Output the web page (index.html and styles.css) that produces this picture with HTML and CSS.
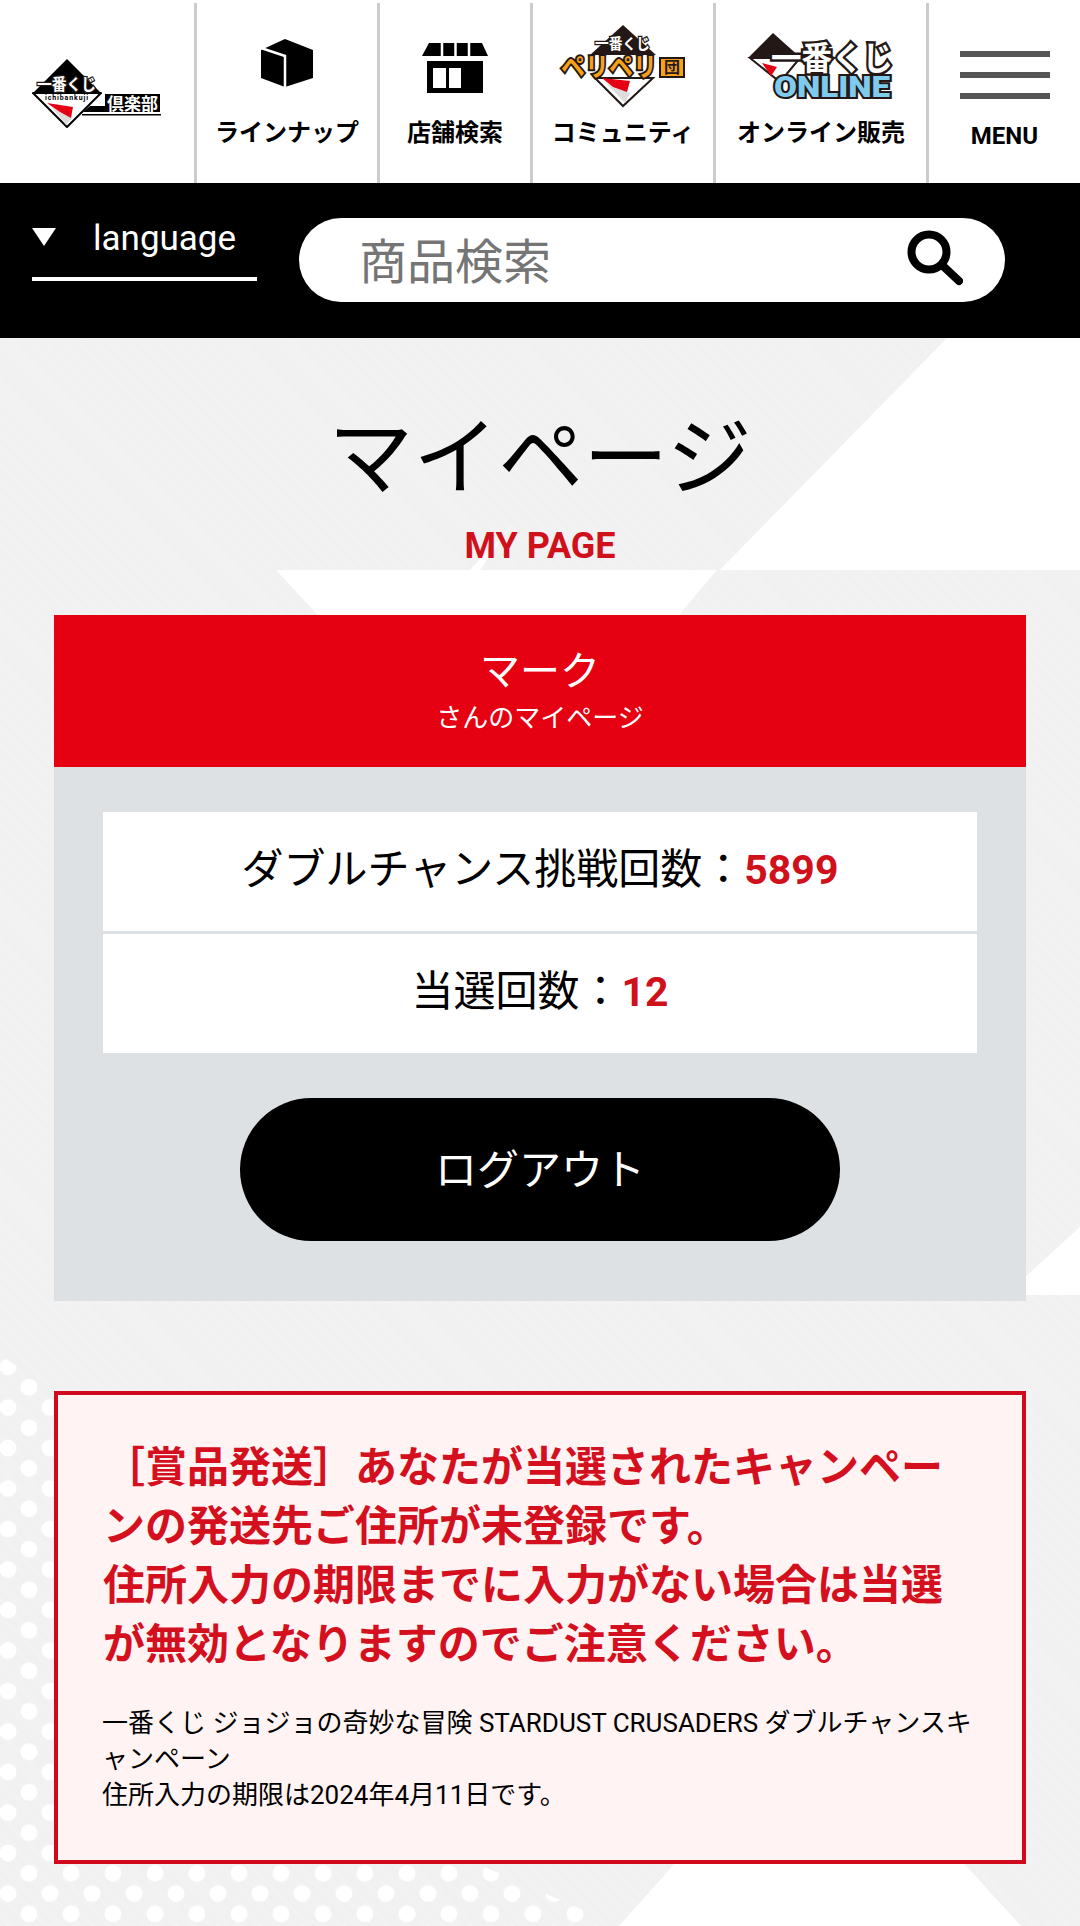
FILE: index.html
```html
<!DOCTYPE html>
<html lang="ja">

<head>
    <meta charset="UTF-8">
    <meta name="viewport" content="width=device-width, initial-scale=1.0">
    <title>マイページ</title>
    <link rel="stylesheet" href="styles.css">
</head>

<body>
    <header class="topNav">
        <a class="navLogo" href="#">
            <svg width="194" height="180" viewBox="0 3 194 180">
                <polygon points="33,93 67,127 101,93" fill="#fff" stroke="#000" stroke-width="2" stroke-linejoin="round" />
                <polygon points="67,59 102,94 32,94" fill="#000" />
                <polygon points="50,105 66,125 72,118 60,112" fill="#ddd" />
                <polygon points="47,103 73,107 71,118 60,112" fill="#e50012" />
                <text x="37" y="90" class="logoBig" font-size="16" textLength="59" lengthAdjust="spacingAndGlyphs">一番くじ</text>
                <text x="45" y="100" class="logoSmall" font-size="7" textLength="43">ichibankuji</text>
                <polygon points="82,113 90,106 105,106 105,94 160,94 160,112 82,112" fill="#000" />
                <rect x="82" y="114" width="79" height="1.5" fill="#000" />
                <text x="90" y="110" class="logoClub" font-size="6" textLength="15">Club</text>
                <text x="107" y="110" class="logoBlock" font-size="17" textLength="51" lengthAdjust="spacingAndGlyphs">倶楽部</text>
            </svg>
        </a>
        <a class="navItem" href="#">
            <svg width="180" height="100" viewBox="197 15 180 100">
                <polygon points="285,39 313,50 313,78 285,87 261,78 261,50" fill="#000" />
                <polyline points="261,48 285,56 285,87" fill="none" stroke="#fff" stroke-width="2.5" />
            </svg>
            <span>ラインナップ</span>
        </a>
        <a class="navItem" href="#">
            <svg width="150" height="100" viewBox="380 15 150 100">
                <polygon points="429,43 482,43 488,56 422,56" fill="#000" />
                <path d="M442 43v13M455.500 43v13M469 43v13" stroke="#fff" stroke-width="2.500" />
                <rect x="427" y="61" width="56" height="32" fill="#000" />
                <rect x="433" y="68" width="13" height="20" fill="#fff" />
                <rect x="449" y="68" width="12" height="20" fill="#fff" />
            </svg>
            <span>店舗検索</span>
        </a>
        <a class="navItem" href="#">
            <svg width="180" height="100" viewBox="533 15 180 100">
                <polygon points="595,78 623,106 653,78" fill="#fff" stroke="#231815" stroke-width="2" />
                <polygon points="623,25 656,55 590,55" fill="#231815" />
                <polygon points="605,82 625,103 630,93 613,87" fill="#ddd" />
                <polygon points="602,78 630,81 627,92 613,87" fill="#e50012" />
                <text x="595" y="49" class="logoBig" font-size="15" textLength="55" lengthAdjust="spacingAndGlyphs">一番くじ</text>
                <text x="561" y="76" class="logoPeri" font-size="26" textLength="96" lengthAdjust="spacingAndGlyphs">ペリペリ</text>
                <rect x="660" y="58" width="24" height="19" fill="#f5a21b" stroke="#231815" stroke-width="2" />
                <text x="664" y="73" class="logoDark" font-size="16">団</text>
            </svg>
            <span>コミュニティ</span>
        </a>
        <a class="navItem" href="#">
            <svg width="210" height="100" viewBox="716 15 210 100">
                <polygon points="750,58 780,82 800,58" fill="#fff" stroke="#231815" stroke-width="2" />
                <polygon points="773,33 801,58 748,58" fill="#231815" />
                <polygon points="762,63 777,67 771,76" fill="#e50012" />
                <text x="771" y="70" class="logoBig logoOnlineTop" font-size="33" textLength="122" lengthAdjust="spacingAndGlyphs">一番くじ</text>
                <text x="774" y="97" class="logoOnline" font-size="30" textLength="116" lengthAdjust="spacingAndGlyphs">ONLINE</text>
            </svg>
            <span>オンライン販売</span>
        </a>
        <button class="menuBtn" type="button">
            <span class="menuBars"><i></i><i></i><i></i></span>
            <span class="menuText">MENU</span>
        </button>
    </header>

    <div class="searchBand">
        <div class="langBox">
            <span class="langArrow"></span>
            <span>language</span>
        </div>
        <form class="searchForm" action="">
            <input class="searchInput" type="text" placeholder="商品検索">
            <button class="searchBtn" type="button" aria-label="検索">
                <svg width="56" height="56" viewBox="0 0 56 56">
                    <circle cx="22" cy="22" r="17.500" fill="none" stroke="#000" stroke-width="8" />
                    <line x1="35" y1="35" x2="52" y2="51" stroke="#000" stroke-width="8" stroke-linecap="round" />
                </svg>
            </button>
        </form>
    </div>

    <main class="content">
        <!-- white shapes and dots behind the page, in page coordinates minus the header -->
        <svg class="bgShapes" width="1080" height="1588" viewBox="0 338 1080 1588">
            <defs>
                <pattern id="dots" x="8" y="1367" width="42" height="40.500" patternUnits="userSpaceOnUse">
                    <circle cx="0" cy="0" r="8.500" fill="#fff" />
                    <circle cx="42" cy="0" r="8.500" fill="#fff" />
                    <circle cx="0" cy="40.500" r="8.500" fill="#fff" />
                    <circle cx="42" cy="40.500" r="8.500" fill="#fff" />
                    <circle cx="21" cy="20.250" r="8.500" fill="#fff" />
                </pattern>
            </defs>
            <polygon points="947,338 1080,338 1080,570 720,570" fill="#fff" />
            <polygon points="276,570 717,570 658,640 341,640" fill="#fff" />
            <polygon points="512,525 470,570 480,570" fill="#fff" />
            <polygon points="1000,1300 1080,1227 1080,1295 1000,1295" fill="#fff" />
            <polygon points="678,1860 961,1860 1021,1926 619,1926" fill="#fff" />
            <polygon points="0,1355 60,1395 60,1865 480,1865 620,1926 0,1926" fill="url(#dots)" />
        </svg>

        <div class="pageTitle">
            <h1>マイページ</h1>
            <p>MY PAGE</p>
        </div>

        <section class="userCard">
            <div class="userHead">
                <div class="userName">マーク</div>
                <div class="userSub">さんのマイページ</div>
            </div>
            <div class="userBody">
                <ul class="statList">
                    <li>ダブルチャンス挑戦回数：<b>5899</b></li>
                    <li>当選回数：<b>12</b></li>
                </ul>
                <a class="logoutBtn" href="#">ログアウト</a>
            </div>
        </section>

        <section class="notice">
            <h2>［賞品発送］あなたが当選されたキャンペーンの発送先ご住所が未登録です。<br>住所入力の期限までに入力がない場合は当選が無効となりますのでご注意ください。</h2>
            <p>一番くじ ジョジョの奇妙な冒険 STARDUST CRUSADERS ダブルチャンスキャンペーン<br>住所入力の期限は2024年4月11日です。</p>
        </section>
    </main>
</body>

</html>
```

FILE: styles.css
```css
html {
    margin: 0;
}

body {
    margin: 0;
    width: 1080px;
    background-color: #fff;
    color: #000;
    font-family: Roboto, "Noto Sans CJK JP", sans-serif;
}

a {
    color: inherit;
    text-decoration: none;
}

/* top nav */
.topNav {
    display: flex;
    height: 180px;
    padding-top: 3px;
    background-color: #fff;
}

.navLogo {
    width: 194px;
    flex: none;
}

.navLogo svg,
.navItem svg {
    display: block;
}

.navItem {
    display: flex;
    flex-flow: column;
    align-items: center;
    flex: none;
    box-sizing: border-box;
    padding-top: 12px;
    border-left: solid 3px #ccc;
    font-size: 24px;
    font-weight: 700;
    line-height: 32px;
}

.navItem span {
    margin-top: 2px;
}

.navItem:nth-child(2),
.navItem:nth-child(4) {
    width: 183px;
}

.navItem:nth-child(3) {
    width: 153px;
}

.navItem:nth-child(5) {
    width: 213px;
}

.menuBtn {
    display: flex;
    flex-flow: column;
    align-items: center;
    flex: 1;
    padding: 48px 0 0;
    border: none;
    border-left: solid 3px #ccc;
    background: none;
    color: #000;
    font-family: inherit;
}

.menuBars {
    display: flex;
    flex-flow: column;
    gap: 15px;
    width: 90px;
}

.menuBars i {
    display: block;
    height: 6px;
    background-color: #555;
}

.menuText {
    margin-top: 23px;
    font-size: 24px;
    font-weight: 700;
    line-height: 28px;
}

.logoBig,
.logoBlock,
.logoSmall,
.logoClub,
.logoPeri,
.logoDark,
.logoOnline {
    font-family: "Noto Sans CJK JP", sans-serif;
    font-weight: 700;
}

.logoBig {
    fill: #fff;
    stroke: #231815;
    stroke-width: 2.5px;
    paint-order: stroke;
}

.logoOnlineTop {
    stroke-width: 5px;
}

.logoSmall,
.logoClub {
    font-family: Roboto, sans-serif;
    fill: #000;
}

.logoBlock {
    fill: #fff;
}

.logoPeri {
    fill: #f5a21b;
    stroke: #231815;
    stroke-width: 4px;
    paint-order: stroke;
}

.logoDark {
    fill: #231815;
}

.logoOnline {
    font-family: Roboto, sans-serif;
    font-weight: 900;
    fill: #7fcbee;
    stroke: #231815;
    stroke-width: 4px;
    paint-order: stroke;
}

/* language + search */
.searchBand {
    display: flex;
    align-items: center;
    height: 155px;
    padding-left: 32px;
    background-color: #000;
}

.langBox {
    display: flex;
    align-self: flex-start;
    align-items: center;
    gap: 37px;
    box-sizing: border-box;
    width: 225px;
    height: 60px;
    margin-top: 38px;
    padding-bottom: 22px;
    border-bottom: solid 4px #fff;
    color: #fff;
    font-size: 35px;
}

.langArrow {
    width: 0;
    height: 0;
    margin-top: -2px;
    border-top: solid 18px #fff;
    border-left: solid 12px transparent;
    border-right: solid 12px transparent;
}

.searchForm {
    display: flex;
    align-items: center;
    box-sizing: border-box;
    width: 706px;
    height: 84px;
    margin-top: -2px;
    margin-left: 42px;
    padding: 0 42px 0 60px;
    border-radius: 42px;
    background-color: #fff;
}

.searchInput {
    flex: 1;
    min-width: 0;
    padding: 0 0 4px;
    border: none;
    outline: none;
    font-family: "Noto Sans CJK JP", sans-serif;
    font-size: 48px;
}

.searchInput::placeholder {
    color: #757575;
}

.searchBtn {
    display: block;
    width: 56px;
    height: 56px;
    margin-top: -4px;
    padding: 0;
    border: none;
    background: none;
}

.searchBtn svg {
    display: block;
}

/* main */
.content {
    position: relative;
    padding: 79px 54px 62px;
    background-color: #f1f1f1;
    background-image: repeating-linear-gradient(45deg, #f0f0f0 0, #f0f0f0 1px, #f3f3f3 1px, #f3f3f3 2px);
    overflow: hidden;
}

.bgShapes {
    position: absolute;
    top: 0;
    left: 0;
}

.pageTitle,
.userCard,
.notice {
    position: relative;
}

.pageTitle {
    text-align: center;
}

.pageTitle h1 {
    margin: 0;
    font-size: 85px;
    font-weight: 400;
    line-height: 84px;
}

.pageTitle p {
    margin: 24px 0 0;
    color: #d0111b;
    font-size: 36px;
    font-weight: 700;
    line-height: 42px;
}

.userCard {
    margin-top: 48px;
    background-color: #dee1e4;
}

.userHead {
    box-sizing: border-box;
    height: 152px;
    padding-top: 32px;
    background-color: #e50012;
    color: #fff;
    text-align: center;
}

.userName {
    font-size: 40px;
    line-height: 50px;
}

.userSub {
    margin-top: 3px;
    font-size: 26px;
    line-height: 36px;
}

.userBody {
    padding: 45px 49px 60px;
}

.statList {
    display: flex;
    flex-flow: column;
    gap: 3px;
    margin: 0;
    padding: 0;
    list-style: none;
}

.statList li {
    height: 119px;
    background-color: #fff;
    font-size: 42px;
    line-height: 115px;
    text-align: center;
}

.statList b {
    color: #d0111b;
    font-size: 41px;
    font-weight: 700;
}

.logoutBtn {
    display: flex;
    align-items: center;
    justify-content: center;
    box-sizing: border-box;
    width: 600px;
    height: 143px;
    margin: 45px auto 0;
    padding-bottom: 6px;
    border-radius: 72px;
    background-color: #000;
    color: #fff;
    font-size: 42px;
}

.notice {
    margin-top: 90px;
    padding: 43px 46px 47px 45px;
    border: solid 4px #cf0a1c;
    background-color: #fff3f3;
    line-break: loose;
}

.notice h2 {
    margin: 0;
    color: #d4101e;
    font-size: 42px;
    font-weight: 700;
    line-height: 59px;
}

.notice p {
    margin: 31px 0 0 -1px;
    font-size: 26px;
    line-height: 36px;
}
```
